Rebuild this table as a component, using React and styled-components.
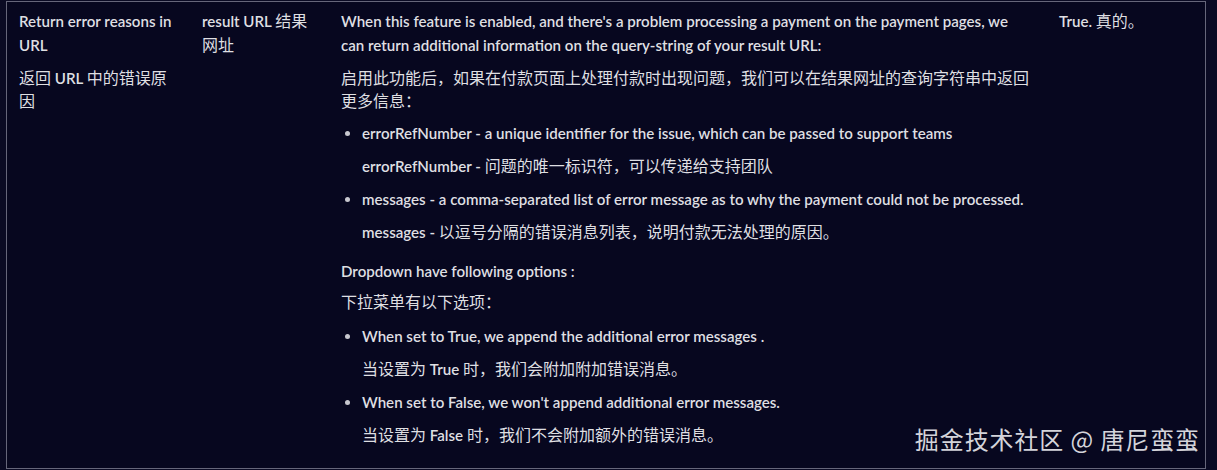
import React from 'react'
import styled, { createGlobalStyle } from 'styled-components'

const GlobalStyle = createGlobalStyle`
  html, body {
    margin: 0;
    padding: 0;
    background: #0a0a23;
  }
  body {
    font-family: Lato, "Noto Sans CJK SC", sans-serif;
    color: #dfdfe2;
  }
`

const Page = styled.div`
  position: relative;
  width: 1217px;
  height: 470px;
  overflow: hidden;
  padding: 1px 0 0 6px;
  box-sizing: border-box;
`

const Table = styled.table`
  width: 1200px;
  height: 468px;
  border-collapse: collapse;
  background: #07071f;
  border: 1px solid #66667a;
`

const Cell = styled.td`
  vertical-align: top;
  width: ${p => p.$w}px;
  padding: 7px ${p => p.$pr || 12}px 12px 12px;
  font-size: 15.1px;
  font-weight: 600;
  line-height: 24px;
`

const P = styled.p`
  margin: 0 0 ${p => (p.$mb != null ? p.$mb : 9)}px;
  line-height: ${p => (p.$zh ? '22px' : '24px')};
`

// Chinese runs are set lighter and a touch larger than the Latin text
const Zh = styled.span`
  font-family: "Noto Sans CJK SC", sans-serif;
  font-weight: 400;
  font-size: 16px;
  line-height: 22px;
`

const List = styled.ul`
  margin: ${p => p.$mt}px 0 ${p => p.$mb}px;
  padding-left: 21px;
  list-style: disc;
`

const Item = styled.li`
  margin-bottom: 9px;
  & > p:last-child { margin-bottom: 0; }
  &::marker { color: #c8c8cf; }
`

const Watermark = styled.div`
  position: absolute;
  right: 17px;
  bottom: 16px;
  font-family: "Noto Sans CJK SC", "Noto Sans", sans-serif;
  font-size: 24px;
  line-height: 30px;
  color: #d4d4da;
  letter-spacing: 0.9px;
`

const App = () => (
  <Page>
    <GlobalStyle />
    <Table>
      <tbody>
        <tr>
          <Cell $w={159}>
            <P>Return error reasons in URL</P>
            <P $zh><Zh>返回</Zh> URL <Zh>中的错误原因</Zh></P>
          </Cell>
          <Cell $w={115}>
            <P>result URL <Zh>结果网址</Zh></P>
          </Cell>
          <Cell $w={690} $pr={16}>
            <P>When this feature is enabled, and there's a problem processing a payment on the payment pages, we can return additional information on the query-string of your result URL:</P>
            <P $zh><Zh>启用此功能后，如果在付款页面上处理付款时出现问题，我们可以在结果网址的查询字符串中返回更多信息：</Zh></P>
            <List $mt={3} $mb={15}>
              <Item>
                <P>errorRefNumber - a unique identifier for the issue, which can be passed to support teams</P>
                <P>errorRefNumber - <Zh>问题的唯一标识符，可以传递给支持团队</Zh></P>
              </Item>
              <Item>
                <P>messages - a comma-separated list of error message as to why the payment could not be processed.</P>
                <P>messages - <Zh>以逗号分隔的错误消息列表，说明付款无法处理的原因。</Zh></P>
              </Item>
            </List>
            <P $mb={7}>Dropdown have following options :</P>
            <P $zh><Zh>下拉菜单有以下选项：</Zh></P>
            <List $mt={11} $mb={0}>
              <Item>
                <P>When set to True, we append the additional error messages .</P>
                <P><Zh>当设置为</Zh> True <Zh>时，我们会附加附加错误消息。</Zh></P>
              </Item>
              <Item>
                <P>When set to False, we won't append additional error messages.</P>
                <P><Zh>当设置为</Zh> False <Zh>时，我们不会附加额外的错误消息。</Zh></P>
              </Item>
            </List>
          </Cell>
          <Cell>
            <P>True. <Zh>真的。</Zh></P>
          </Cell>
        </tr>
      </tbody>
    </Table>
    <Watermark>掘金技术社区 @ 唐尼蛮蛮</Watermark>
  </Page>
)

export default App
